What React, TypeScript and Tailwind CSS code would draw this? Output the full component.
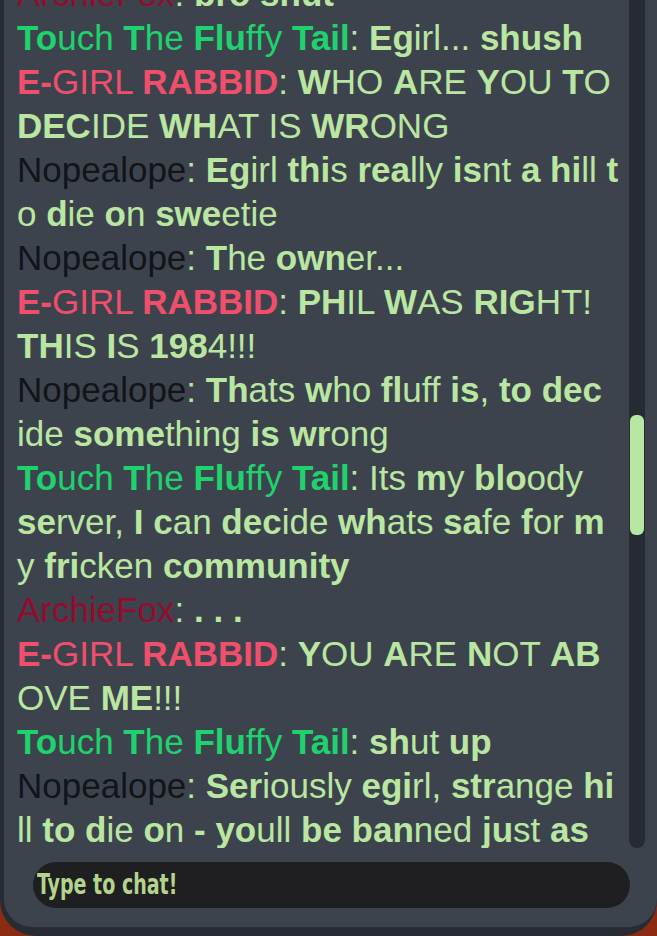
import React from 'react';

type Msg = {
  name: string;
  color: string;
  text: string;
};

// "*" toggles bold on and off
const messages: Msg[] = [
  { name: 'ArchieFox', color: 'text-[#930c2e]', text: '*bro shut*' },
  { name: '*To*uch *T*he *Flu*ffy *Tail*', color: 'text-[#1ed26e]', text: '*Eg*irl... *shush*' },
  { name: '*E-*GIRL *RABBID*', color: 'text-[#ef4f6b]', text: '*W*HO *A*RE *Y*OU *T*O\n*DEC*IDE *WH*AT IS *WR*ONG' },
  { name: 'Nopealope', color: 'text-[#121419]', text: '*Eg*irl *thi*s *rea*lly *is*nt *a* *hi*ll *t*\no *d*ie *o*n *swe*etie' },
  { name: 'Nopealope', color: 'text-[#121419]', text: '*T*he *own*er...' },
  { name: '*E-*GIRL *RABBID*', color: 'text-[#ef4f6b]', text: '*PH*IL *W*AS *RIG*HT!\n*TH*IS *I*S *198*4!!!' },
  { name: 'Nopealope', color: 'text-[#121419]', text: '*Th*ats *w*ho *fl*uff *is*, *to* *dec*\nide *some*thing *is* *wr*ong' },
  { name: '*To*uch *T*he *Flu*ffy *Tail*', color: 'text-[#1ed26e]', text: 'Its *m*y *blo*ody\n*se*rver, *I* *c*an *dec*ide *wh*ats *sa*fe *f*or *m*\ny *fri*cken *community*' },
  { name: 'ArchieFox', color: 'text-[#930c2e]', text: '*. . .*' },
  { name: '*E-*GIRL *RABBID*', color: 'text-[#ef4f6b]', text: '*Y*OU *A*RE *N*OT *AB*\nOVE *ME*!!!' },
  { name: '*To*uch *T*he *Flu*ffy *Tail*', color: 'text-[#1ed26e]', text: '*sh*ut *up*' },
  { name: 'Nopealope', color: 'text-[#121419]', text: '*Ser*iously *egi*rl, *str*ange *hi*\nll *to* *d*ie *o*n *-* *yo*ull *be* *ban*ned *ju*st *as*' },
];

const Rich: React.FC<{ text: string }> = ({ text }) => (
  <>
    {text.split('*').map((part, i) =>
      i % 2 === 1 ? (
        <b key={i} className="font-bold">{part}</b>
      ) : (
        <span key={i}>{part}</span>
      )
    )}
  </>
);

const App: React.FC = () => {
  return (
    <div className="w-[657px] h-[936px] bg-[#8a2b12] overflow-hidden">
      <div className="h-full bg-[#272b34] rounded-b-[36px] pl-[4px] pb-[9px]">
        <div className="h-full bg-[#3d434d] rounded-b-[28px] flex flex-col">
          {/* Messages + scrollbar */}
          <div className="flex flex-1 min-h-0">
            <div className="flex-1 overflow-hidden pl-[13px]">
              <div
                className="-mt-[28px] text-[35px] leading-[44px] text-[#b9e7a2] whitespace-pre"
                style={{ fontFamily: '"Liberation Sans", Arial, sans-serif' }}
              >
                {messages.map((m, i) => (
                  <div key={i}>
                    <span className={m.color}>
                      <Rich text={m.name} />
                    </span>
                    <span>: </span>
                    <Rich text={m.text} />
                  </div>
                ))}
              </div>
            </div>
            <div className="w-[16px] mr-[12px] bg-[#262a33] rounded-b-full flex flex-col">
              <div className="mt-[415px] h-[120px] mx-[1px] bg-[#b7e7a1] rounded-[6px]" />
            </div>
          </div>

          {/* Input */}
          <div className="pl-[29px] pr-[27px] pt-[14px] pb-[19px]">
            <div className="h-[46px] rounded-full bg-[#1f1f22] pl-[4px] overflow-hidden flex items-center">
              <input
                type="text"
                placeholder="Type to chat!"
                className="w-[130%] shrink-0 origin-left scale-x-[0.73] bg-transparent text-[29px] font-bold text-[#b3d48c] placeholder:text-[#b3d48c] outline-none"
                style={{ fontFamily: '"DejaVu Sans Condensed", "DejaVu Sans", sans-serif' }}
              />
            </div>
          </div>
        </div>
      </div>
    </div>
  );
};

export default App;
